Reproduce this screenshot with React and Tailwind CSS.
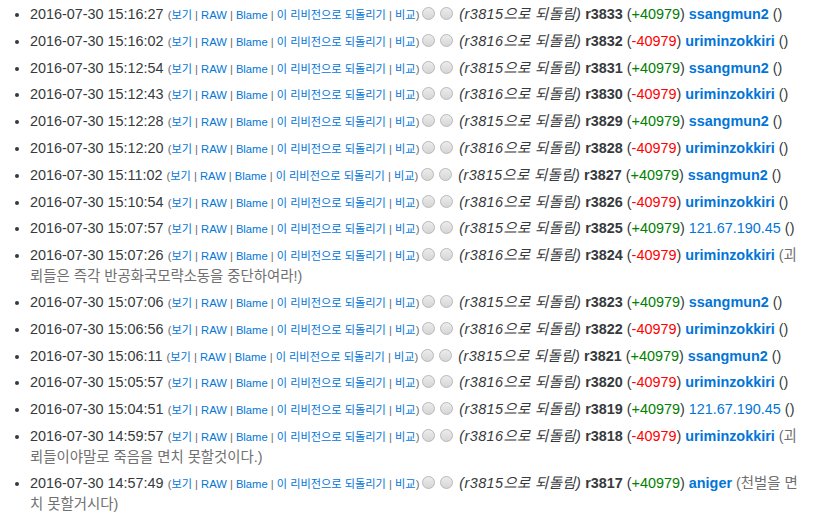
const history = [
  { time: '2016-07-30 15:16:27', target: 'r3815', rev: 'r3833', diff: '+40979', user: 'ssangmun2' },
  { time: '2016-07-30 15:16:02', target: 'r3816', rev: 'r3832', diff: '-40979', user: 'uriminzokkiri' },
  { time: '2016-07-30 15:12:54', target: 'r3815', rev: 'r3831', diff: '+40979', user: 'ssangmun2' },
  { time: '2016-07-30 15:12:43', target: 'r3816', rev: 'r3830', diff: '-40979', user: 'uriminzokkiri' },
  { time: '2016-07-30 15:12:28', target: 'r3815', rev: 'r3829', diff: '+40979', user: 'ssangmun2' },
  { time: '2016-07-30 15:12:20', target: 'r3816', rev: 'r3828', diff: '-40979', user: 'uriminzokkiri' },
  { time: '2016-07-30 15:11:02', target: 'r3815', rev: 'r3827', diff: '+40979', user: 'ssangmun2' },
  { time: '2016-07-30 15:10:54', target: 'r3816', rev: 'r3826', diff: '-40979', user: 'uriminzokkiri' },
  { time: '2016-07-30 15:07:57', target: 'r3815', rev: 'r3825', diff: '+40979', user: '121.67.190.45', ip: true },
  { time: '2016-07-30 15:07:26', target: 'r3816', rev: 'r3824', diff: '-40979', user: 'uriminzokkiri', log: ['괴', '뢰들은 즉각 반공화국모략소동을 중단하여라!'] },
  { time: '2016-07-30 15:07:06', target: 'r3815', rev: 'r3823', diff: '+40979', user: 'ssangmun2' },
  { time: '2016-07-30 15:06:56', target: 'r3816', rev: 'r3822', diff: '-40979', user: 'uriminzokkiri' },
  { time: '2016-07-30 15:06:11', target: 'r3815', rev: 'r3821', diff: '+40979', user: 'ssangmun2' },
  { time: '2016-07-30 15:05:57', target: 'r3816', rev: 'r3820', diff: '-40979', user: 'uriminzokkiri' },
  { time: '2016-07-30 15:04:51', target: 'r3815', rev: 'r3819', diff: '+40979', user: '121.67.190.45', ip: true },
  { time: '2016-07-30 14:59:57', target: 'r3816', rev: 'r3818', diff: '-40979', user: 'uriminzokkiri', log: ['괴', '뢰들이야말로 죽음을 면치 못할것이다.'] },
  { time: '2016-07-30 14:57:49', target: 'r3815', rev: 'r3817', diff: '+40979', user: 'aniger', log: ['천벌을 면', '치 못할거시다'] },
];

const FONT = { fontFamily: '"Liberation Sans", Arial, "Noto Sans CJK KR", sans-serif' };

function Radio() {
  return (
    <span className="inline-block w-[13px] h-[13px] rounded-full border border-[#b8b8b8] bg-gradient-to-b from-[#ececec] to-[#d6d6d6] align-[-1px] mx-[2.5px]" />
  );
}

function Sep() {
  return <span className="text-[#6b6b6b]"> | </span>;
}

function Tools() {
  return (
    <span className="text-[11.2px] text-[#6b6b6b]">
      (<a className="text-[#0275d8]">보기</a>
      <Sep />
      <a className="text-[#0275d8]">RAW</a>
      <Sep />
      <a className="text-[#0275d8]">Blame</a>
      <Sep />
      <a className="text-[#0275d8]">이 리비전으로 되돌리기</a>
      <Sep />
      <a className="text-[#0275d8]">비교</a>)
    </span>
  );
}

export default function App() {
  return (
    <div className="w-[815px] h-[520px] overflow-hidden bg-white text-[#373a3c] text-[14.4px]" style={FONT}>
      <ul className="list-disc pl-[30px] pt-[4px] flex flex-col gap-[5.8px]">
        {history.map(h => (
          <li key={h.rev} className="leading-[20px] whitespace-nowrap">
            {h.time} <Tools />
            <Radio />
            <Radio />{' '}
            <i className="text-[#373a3c] tracking-[0.4px]">({h.target}으로 되돌림)</i>{' '}
            <strong className="font-bold">{h.rev}</strong>{' '}
            (<span className={h.diff.startsWith('+') ? 'text-[#008000]' : 'text-[#ff0000]'}>{h.diff}</span>){' '}
            <a className={h.ip ? 'text-[#0275d8]' : 'text-[#0275d8] font-bold'}>{h.user}</a>{' '}
            {h.log ? (
              <span className="text-[#707070]">
                ({h.log[0]}
                <br />
                {h.log[1]})
              </span>
            ) : (
              <span>()</span>
            )}
          </li>
        ))}
      </ul>
    </div>
  );
}
